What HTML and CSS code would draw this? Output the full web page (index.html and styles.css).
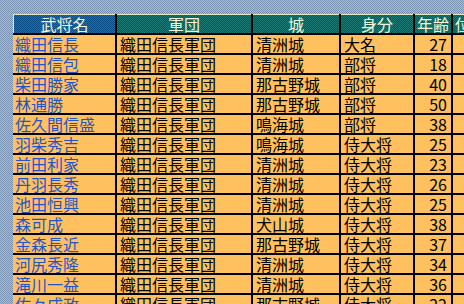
FILE: index.html
```html
<!DOCTYPE html>
<html lang="ja">
<head>
<meta charset="utf-8">
<link rel="stylesheet" href="styles.css">
</head>
<body>
<div class="grid">
  <div class="h first">武将名</div><div class="h">軍団</div><div class="h">城</div><div class="h">身分</div><div class="h">年齢</div><div class="h">位置</div>

  <div class="c name">織田信長</div><div class="c">織田信長軍団</div><div class="c">清洲城</div><div class="c">大名</div><div class="c num">27</div><div class="c"></div>
  <div class="c name">織田信包</div><div class="c">織田信長軍団</div><div class="c">清洲城</div><div class="c">部将</div><div class="c num">18</div><div class="c"></div>
  <div class="c name">柴田勝家</div><div class="c">織田信長軍団</div><div class="c">那古野城</div><div class="c">部将</div><div class="c num">40</div><div class="c"></div>
  <div class="c name">林通勝</div><div class="c">織田信長軍団</div><div class="c">那古野城</div><div class="c">部将</div><div class="c num">50</div><div class="c"></div>
  <div class="c name">佐久間信盛</div><div class="c">織田信長軍団</div><div class="c">鳴海城</div><div class="c">部将</div><div class="c num">38</div><div class="c"></div>
  <div class="c name">羽柴秀吉</div><div class="c">織田信長軍団</div><div class="c">鳴海城</div><div class="c">侍大将</div><div class="c num">25</div><div class="c"></div>
  <div class="c name">前田利家</div><div class="c">織田信長軍団</div><div class="c">清洲城</div><div class="c">侍大将</div><div class="c num">23</div><div class="c"></div>
  <div class="c name">丹羽長秀</div><div class="c">織田信長軍団</div><div class="c">清洲城</div><div class="c">侍大将</div><div class="c num">26</div><div class="c"></div>
  <div class="c name">池田恒興</div><div class="c">織田信長軍団</div><div class="c">清洲城</div><div class="c">侍大将</div><div class="c num">25</div><div class="c"></div>
  <div class="c name">森可成</div><div class="c">織田信長軍団</div><div class="c">犬山城</div><div class="c">侍大将</div><div class="c num">38</div><div class="c"></div>
  <div class="c name">金森長近</div><div class="c">織田信長軍団</div><div class="c">那古野城</div><div class="c">侍大将</div><div class="c num">37</div><div class="c"></div>
  <div class="c name">河尻秀隆</div><div class="c">織田信長軍団</div><div class="c">清洲城</div><div class="c">侍大将</div><div class="c num">34</div><div class="c"></div>
  <div class="c name">滝川一益</div><div class="c">織田信長軍団</div><div class="c">清洲城</div><div class="c">侍大将</div><div class="c num">36</div><div class="c"></div>
  <div class="c name">佐々成政</div><div class="c">織田信長軍団</div><div class="c">那古野城</div><div class="c">侍大将</div><div class="c num">22</div><div class="c"></div>
</div>
</body>
</html>
```

FILE: styles.css
```css
html, body {
  margin: 0;
  padding: 0;
  width: 464px;
  height: 304px;
  overflow: hidden;
}
body {
  background: repeating-conic-gradient(#dcb870 0 25%, #7890b0 0 50%) 0 0 / 2px 2px;
  font-family: "Noto Sans CJK JP", "Noto Sans", sans-serif;
  font-size: 16px;
}
.grid {
  display: grid;
  grid-template-columns: 102px 134px 86px 72px 36px 36px;
  grid-template-rows: 19px;
  grid-auto-rows: 18px;
  gap: 2px;
  margin: 14px 0 0 13px;
  width: 476px;
  background: #000;
}
.h {
  background: repeating-conic-gradient(#084c88 0 25%, #1e7a74 0 50%) 0 0 / 2px 2px;
  color: #f4f4d8;
  text-align: center;
  line-height: 18px;
  border-top: 1px solid #e8e8c8;
  white-space: nowrap;
}
.h.first {
  border-left: 1px solid #e8e8c8;
}
.c {
  background: #ffc060;
  color: #000;
  line-height: 18px;
  padding: 0 3px;
  white-space: nowrap;
}
.name {
  color: #1f55c8;
  padding-left: 2px;
}
.num {
  text-align: right;
  padding-right: 4px;
}
```
